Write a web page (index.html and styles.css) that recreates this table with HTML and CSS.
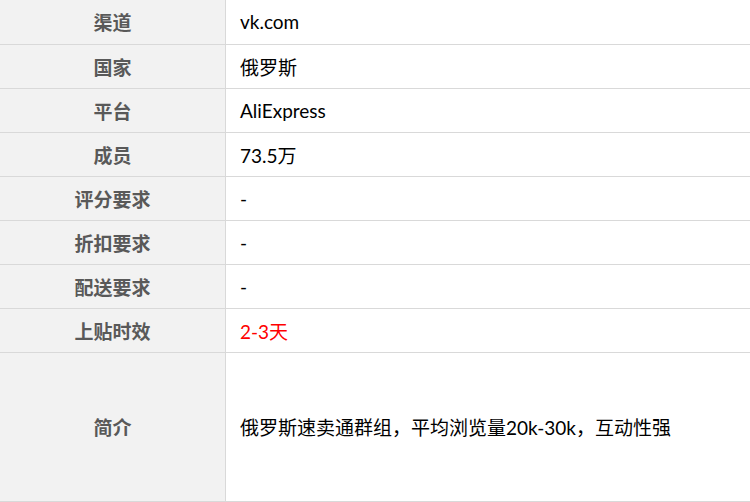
FILE: index.html
```html
<html lang="zh-CN">
<head>
    <meta charset="UTF-8">
    <meta name="viewport" content="width=device-width, initial-scale=1.0">
    <title>渠道信息</title>
    <link rel="stylesheet" href="styles.css">
</head>
<body>

    <div class="info-table">
        <div class="row">
            <div class="label">渠道</div>
            <div class="value">vk.com</div>
        </div>
        <div class="row">
            <div class="label">国家</div>
            <div class="value">俄罗斯</div>
        </div>
        <div class="row">
            <div class="label">平台</div>
            <div class="value">AliExpress</div>
        </div>
        <div class="row">
            <div class="label">成员</div>
            <div class="value">73.5万</div>
        </div>
        <div class="row">
            <div class="label">评分要求</div>
            <div class="value">-</div>
        </div>
        <div class="row">
            <div class="label">折扣要求</div>
            <div class="value">-</div>
        </div>
        <div class="row">
            <div class="label">配送要求</div>
            <div class="value">-</div>
        </div>
        <div class="row">
            <div class="label">上贴时效</div>
            <div class="value highlight">2-3天</div>
        </div>
        <div class="row row-tall">
            <div class="label">简介</div>
            <div class="value">俄罗斯速卖通群组，平均浏览量20k-30k，互动性强</div>
        </div>
    </div>

</body>
</html>
```

FILE: styles.css
```css
* {
    margin: 0;
    padding: 0;
    box-sizing: border-box;
}

body {
    background: #fff;
    font-family: Lato, "Noto Sans CJK SC", sans-serif;
    color: #000;
}

.info-table {
    width: 750px;
}

.row {
    display: flex;
    height: 44px;
    border-bottom: 1px solid #d9d9d9;
}

.row:first-child {
    height: 45px;
}

.row-tall {
    height: 149px;
}

.label {
    width: 226px;
    flex-shrink: 0;
    background: #f2f2f2;
    border-right: 1px solid #d9d9d9;
    display: flex;
    align-items: center;
    justify-content: center;
    padding-bottom: 1px;
    font-size: 19px;
    font-weight: bold;
    color: #595959;
}

.value {
    flex: 1;
    display: flex;
    align-items: center;
    padding-left: 14px;
    padding-bottom: 1px;
    font-size: 19px;
}

.highlight {
    color: #ff0000;
}
```
